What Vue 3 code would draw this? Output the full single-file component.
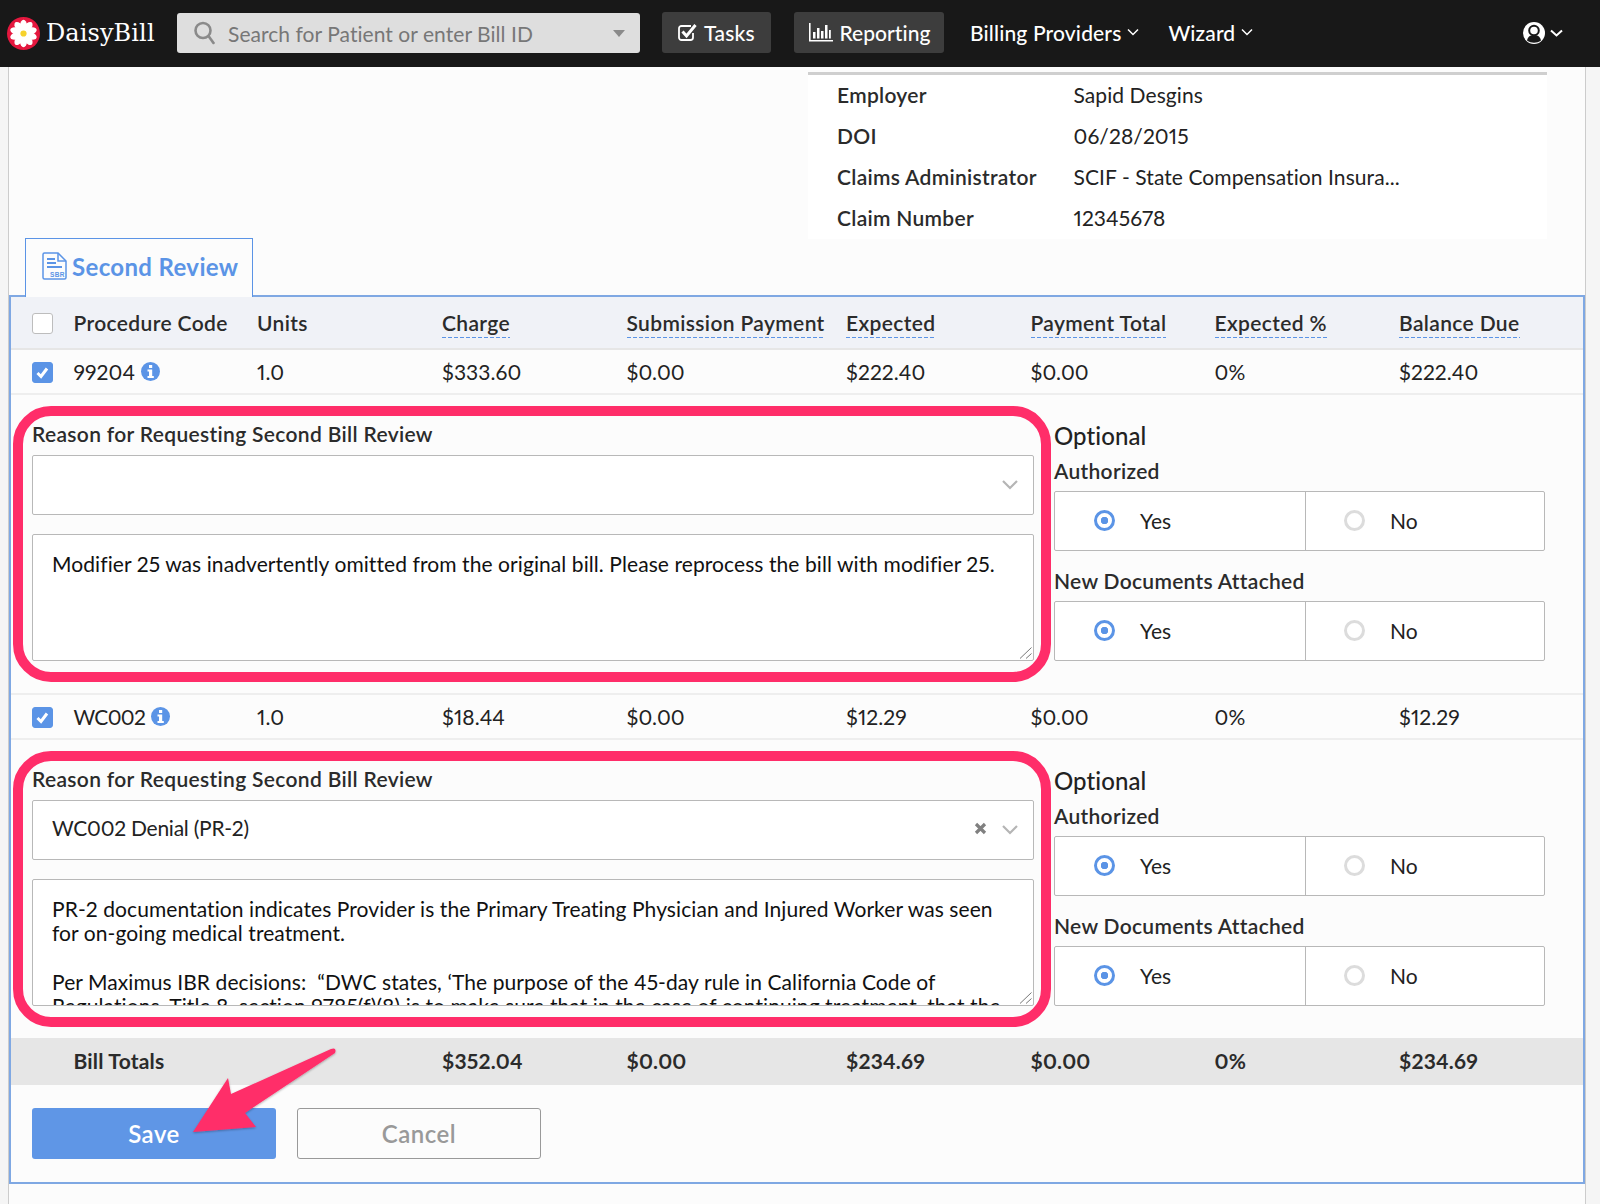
<script setup>
const info = [
  ['Employer', 'Sapid Desgins'],
  ['DOI', '06/28/2015'],
  ['Claims Administrator', 'SCIF - State Compensation Insura...'],
  ['Claim Number', '12345678'],
]
const headers = [
  { t: 'Units' }, { t: 'Charge', u: true }, { t: 'Submission Payment', u: true }, { t: 'Expected', u: true },
  { t: 'Payment Total', u: true }, { t: 'Expected %', u: true }, { t: 'Balance Due', u: true },
]
const blocks = [
  {
    code: '99204',
    cells: ['1.0', '$333.60', '$0.00', '$222.40', '$0.00', '0%', '$222.40'],
    reason: '',
    text: 'Modifier 25 was inadvertently omitted from the original bill. Please reprocess the bill with modifier 25.',
  },
  {
    code: 'WC002',
    tight: true,
    cells: ['1.0', '$18.44', '$0.00', '$12.29', '$0.00', '0%', '$12.29'],
    reason: 'WC002 Denial (PR-2)',
    text: 'PR-2 documentation indicates Provider is the Primary Treating Physician and Injured Worker was seen\nfor on-going medical treatment.\n\nPer Maximus IBR decisions:  “DWC states, ‘The purpose of the 45-day rule in California Code of\nRegulations, Title 8, section 9785(f)(8) is to make sure that in the case of continuing treatment, that the\ntreating physician reports on the status of the injured worker.’”',
  },
]
const totals = ['', '$352.04', '$0.00', '$234.69', '$0.00', '0%', '$234.69']
const toggles = ['Authorized', 'New Documents Attached']
const petals = [0, 36, 72, 108, 144, 180, 216, 252, 288, 324]
</script>

<template>
  <div class="root">
    <header class="top">
      <svg class="logo" viewBox="0 0 34 34" width="33" height="33">
        <circle cx="17" cy="17" r="17" fill="#e4173e" />
        <g fill="#fff">
          <ellipse v-for="a in petals" :key="a" cx="17" cy="9" rx="3.600" ry="6.200" :transform="`rotate(${a} 17 17)`" />
        </g>
        <circle cx="17" cy="17" r="3.200" fill="#f6d22c" />
      </svg>
      <span class="brand">DaisyBill</span>
      <div class="search">
        <svg width="24" height="26" viewBox="0 0 24 26" fill="none" stroke="#8a8a8a" stroke-width="2.600">
          <circle cx="10" cy="10.500" r="7.500" /><path d="M15.500 16l5 7" stroke-linecap="round" />
        </svg>
        <span class="search-text">Search for Patient or enter Bill ID</span>
        <i class="caret"></i>
      </div>
      <div class="nav-btn tasks">
        <svg width="20" height="19" viewBox="0 0 20 19" fill="none">
          <path d="M13 3H3.500A2.500 2.500 0 0 0 1 5.500v9A2.500 2.500 0 0 0 3.500 17h9a2.500 2.500 0 0 0 2.500-2.500V10" stroke="#fff" stroke-width="1.800" />
          <path d="M4.500 8.500l4 4.500L17.500 2" stroke="#fff" stroke-width="3" />
        </svg>
        <span>Tasks</span>
      </div>
      <div class="nav-btn reporting">
        <svg width="24" height="19" viewBox="0 0 24 19" fill="#fff">
          <path d="M0 0h1.600v17H24v1.500H0zM4 9h2.500v6.500H4zM8 5h2.500v10.500H8zM12 8h2.500v7.500H12zM16 2h2.500v13.500H16zM20 7h1.800v8.500H20z" />
        </svg>
        <span>Reporting</span>
      </div>
      <div class="nav-link providers">Billing Providers
        <svg class="chev" width="12" height="8" viewBox="0 0 12 8" fill="none" stroke="#fff" stroke-width="1.500"><path d="M1 1.500l5 5 5-5" /></svg>
      </div>
      <div class="nav-link wizard">Wizard
        <svg class="chev" width="12" height="8" viewBox="0 0 12 8" fill="none" stroke="#fff" stroke-width="1.500"><path d="M1 1.500l5 5 5-5" /></svg>
      </div>
      <div class="user">
        <svg width="22" height="22" viewBox="0 0 22 22">
          <circle cx="11" cy="11" r="11" fill="#fff" />
          <circle cx="11" cy="8.500" r="4.800" fill="none" stroke="#181818" stroke-width="2" />
          <path d="M4 18.500c1-4.500 4-5.500 7-5.500s6 1 7 5.500c-4 3-10 3-14 0z" fill="#181818" />
        </svg>
        <svg class="chev" width="13" height="8" viewBox="0 0 13 8" fill="none" stroke="#fff" stroke-width="2"><path d="M1 1.500l5.500 5 5.500-5" /></svg>
      </div>
    </header>

    <main class="page">
      <section class="info-wrap">
        <div class="info">
          <div v-for="r in info" :key="r[0]" class="info-row">
            <span class="info-k">{{ r[0] }}</span>
            <span>{{ r[1] }}</span>
          </div>
        </div>
      </section>

      <div class="tab">
        <svg width="25" height="28" viewBox="0 0 25 28" fill="none" stroke="#5b94e6" stroke-width="1.500">
          <path d="M2.500 1H16l8 8v16.500a1.500 1.500 0 0 1-1.500 1.500h-20A1.500 1.500 0 0 1 1 25.500v-23A1.500 1.500 0 0 1 2.500 1z" /><path d="M16 1v8h8" />
          <path d="M5 7h8M5 11h9M5 15h15" stroke-width="1.800" />
          <text x="8" y="24.500" font-size="6.500" font-weight="700" fill="#5b94e6" stroke="none" font-family="Liberation Sans, sans-serif">SBR</text>
        </svg>
        <span>Second Review</span>
      </div>

      <section class="panel">
        <div class="grid head">
          <span class="cb"></span>
          <span>Procedure Code</span>
          <span v-for="h in headers" :key="h.t"><span :class="{ dashed: h.u }">{{ h.t }}</span></span>
        </div>

        <template v-for="b in blocks" :key="b.code">
          <div class="grid row">
            <span class="cb on">
              <svg width="15" height="13" viewBox="0 0 15 13" fill="none" stroke="#fff" stroke-width="3"><path d="M2.500 7l3.500 3.500 6-8" /></svg>
            </span>
            <span class="code" :class="{ tight: b.tight }"><span>{{ b.code }}</span>
              <svg width="19" height="19" viewBox="0 0 19 19"><circle cx="9.500" cy="9.500" r="9.500" fill="#5b94e6" /><rect x="8" y="3" width="3.200" height="3" fill="#fff" /><path d="M6.500 7.500h4.700v6.500h1.600v2H6.500v-2h1.500V9.500H6.500z" fill="#fff" /></svg>
            </span>
            <span v-for="(c, i) in b.cells" :key="i">{{ c }}</span>
          </div>

          <div class="review">
            <div class="review-left">
              <label class="field-label">Reason for Requesting Second Bill Review</label>
              <div class="select">
                <span>{{ b.reason }}</span>
                <svg v-if="b.reason" class="clear" width="13" height="13" viewBox="0 0 13 13" stroke="#808080" stroke-width="3.200"><path d="M2 2l9 9M11 2l-9 9" /></svg>
                <svg class="sel-chev" width="16" height="10" viewBox="0 0 16 10" fill="none" stroke="#b5b5b5" stroke-width="2.200"><path d="M1 1l7 7 7-7" /></svg>
              </div>
              <div class="note-wrap">
                <textarea class="note" readonly :value="b.text"></textarea>
                <svg class="grip" width="13" height="12" viewBox="0 0 13 12" fill="none" stroke="#777" stroke-width="1"><path d="M1 11.500L12.500 .500M7 11.500l5.500-5" /></svg>
              </div>
            </div>
            <div class="review-right">
              <div class="optional">Optional</div>
              <div v-for="t in toggles" :key="t" class="toggle-group">
                <div class="toggle-label">{{ t }}</div>
                <div class="toggle">
                  <div class="opt yes"><i class="radio on"></i>Yes</div>
                  <div class="opt"><i class="radio"></i>No</div>
                </div>
              </div>
            </div>
            <div class="highlight"></div>
          </div>
        </template>

        <div class="grid totals">
          <span></span>
          <span>Bill Totals</span>
          <span v-for="(c, i) in totals" :key="i">{{ c }}</span>
        </div>

        <div class="actions">
          <button class="btn save">Save</button>
          <button class="btn cancel">Cancel</button>
        </div>
      </section>
    </main>

    <svg class="arrow" width="360" height="110" viewBox="0 0 360 110">
      <defs>
        <filter id="sh" x="-10%" y="-10%" width="120%" height="130%">
          <feDropShadow dx="0" dy="1" stdDeviation="1.200" flood-color="#000" flood-opacity="0.3" />
        </filter>
      </defs>
      <path d="M193 87 L228 33 L231 49 L331 4 Q337 2 335 8 L245 68 L256 82 Z" fill="#ff2d69" filter="url(#sh)" />
    </svg>
  </div>
</template>

<style scoped>
.root {
  position: relative;
  width: 1600px;
  height: 1204px;
  overflow: hidden;
  background: #f5f5f5;
  font-family: "Lato", "Liberation Sans", sans-serif;
  font-size: 21px;
  font-variant-numeric: proportional-nums;
  letter-spacing: 0.08px;
  color: #222;
}
.top {
  height: 67px;
  background: #181818;
  display: flex;
  align-items: center;
  color: #fff;
  padding-left: 7px;
  box-sizing: border-box;
}
.logo { flex: none; }
.brand {
  font-family: "DejaVu Serif", serif;
  font-size: 24px;
  margin-left: 6px;
  width: 131px;
  letter-spacing: 0.1px;
  margin-top: -1px;
}
.search {
  width: 463px;
  height: 40px;
  box-sizing: border-box;
  background: #dedede;
  border-radius: 3px;
  display: flex;
  align-items: center;
  padding-left: 16px;
  color: #777;
  margin-top: -1px;
}
.search-text { margin-left: 11px; flex: 1; letter-spacing: 0.05px; }
.caret {
  width: 0; height: 0;
  border-left: 6px solid transparent;
  border-right: 6px solid transparent;
  border-top: 7px solid #8a8a8a;
  margin-right: 15px;
}
.nav-btn {
  height: 41px;
  background: #3d3d3d;
  border-radius: 3px;
  display: flex;
  align-items: center;
  justify-content: center;
  gap: 6px;
  margin-top: -2px;
  font-weight: 500;
  letter-spacing: 0.25px;
}
.nav-btn span { margin-top: -1px; }
.tasks { width: 109px; margin-left: 22px; }
.reporting { width: 150px; margin-left: 23px; padding-left: 2px; box-sizing: border-box; letter-spacing: 0.05px; }
.nav-link { display: flex; align-items: center; gap: 6px; margin-top: -3px; font-weight: 500; letter-spacing: 0.15px; }
.providers { margin-left: 26px; }
.wizard { margin-left: 29px; }
.user { margin-left: auto; margin-right: 37px; display: flex; align-items: center; gap: 5px; margin-top: -2px; }

.page {
  margin-left: 8px;
  width: 1578px;
  height: 1137px;
  box-sizing: border-box;
  background: #fcfcfc;
  border-left: 1px solid #ccc;
  border-right: 1px solid #ccc;
}
.info-wrap {
  display: flex;
  justify-content: flex-end;
  padding-right: 38px;
  padding-top: 5px;
  height: 167px;
}
.info {
  width: 739px;
  background: #fff;
  border-top: 3px solid #cfcfcf;
  padding-left: 29px;
  box-sizing: border-box;
  height: 167px;
}
.info-row { height: 41px; display: flex; align-items: center; margin-top: -1px; margin-bottom: 1px; }
.info-k { width: 236.500px; font-weight: 600; letter-spacing: 0.3px; color: #2b2b2b; }

.tab {
  margin: -1px 0 -2px 16px;
  width: 228px;
  height: 59px;
  box-sizing: border-box;
  border: 1px solid #5b94e6;
  border-bottom: 0;
  background: #fcfcfc;
  position: relative;
  z-index: 1;
  display: flex;
  align-items: center;
  padding: 0 0 4px 16px;
  gap: 5px;
  color: #5b94e6;
  font-size: 24px;
  font-weight: 700;
  letter-spacing: 0.35px;
}
.panel {
  border: 2px solid #7fa8e3;
  height: 889px;
  box-sizing: border-box;
  width: 1576px;
}
.grid {
  display: grid;
  grid-template-columns: 41.500px 183.500px 185px 184.500px 219.500px 184.500px 184px 184.500px 1fr;
  padding-left: 21px;
  align-items: center;
}
.head {
  height: 53px;
  background: #f0f2f7;
  border-bottom: 2px solid #e6e6e6;
  box-sizing: border-box;
  font-weight: 600;
  letter-spacing: 0.36px;
  color: #2b2b2b;
}
.dashed {
  padding-bottom: 3px;
  background: repeating-linear-gradient(90deg, #5b94e6 0 4px, transparent 4px 6px) left bottom / 100% 1.500px no-repeat;
}
.cb {
  width: 21px; height: 21px;
  box-sizing: border-box;
  border: 1px solid #bdbdbd;
  border-radius: 3px;
  background: #fff;
  display: flex;
  align-items: center;
  justify-content: center;
  margin-top: 2px;
}
.cb.on { background: #5b94e6; border-color: #5b94e6; }
.row {
  height: 45px;
  box-sizing: border-box;
  border-bottom: 2px solid #eee;
}
.review + .row { border-top: 2px solid #eee; height: 47px; }
.code { display: flex; align-items: center; gap: 6px; }
.code.tight span { letter-spacing: -0.7px; }
.review {
  position: relative;
  display: flex;
  height: 298px;
  box-sizing: border-box;
  padding: 0 0 0 21px;
}
.review-left { width: 1002px; padding-top: 28.500px; display: flex; flex-direction: column; }
.field-label { font-weight: 600; height: 20px; line-height: 20px; margin-bottom: 11px; letter-spacing: 0.33px; color: #2b2b2b; }
.select {
  height: 60px;
  flex: none;
  box-sizing: border-box;
  background: #fff;
  border: 1px solid #b8b8b8;
  border-radius: 2px;
  display: flex;
  align-items: center;
  padding: 0 0 4px 19px;
  margin-bottom: 19px;
  position: relative;
  letter-spacing: -0.25px;
}
.clear { position: absolute; right: 46px; top: 21px; }
.sel-chev { position: absolute; right: 15px; top: 24px; }
.note-wrap { position: relative; height: 127px; }
.note {
  display: block;
  width: 1002px;
  height: 127px;
  box-sizing: border-box;
  padding: 17.500px 19px 0;
  background: #fff;
  border: 1px solid #b8b8b8;
  border-radius: 2px;
  font: inherit;
  letter-spacing: 0.08px;
  line-height: 24.200px;
  color: #111;
  overflow: hidden;
  resize: none;
  outline: none;
  margin: 0;
}
.grip { position: absolute; right: 2px; bottom: 2px; }
.review-right { margin-left: 20px; width: 491px; padding-top: 26px; }
.optional { font-size: 24px; font-weight: 500; height: 35px; line-height: 30px; }
.toggle-label { font-weight: 600; height: 24px; line-height: 24px; margin-top: 3px; margin-bottom: 8px; letter-spacing: 0.3px; color: #2b2b2b; }
.toggle-group + .toggle-group .toggle-label { margin-top: 17.500px; }
.toggle {
  height: 60px;
  box-sizing: border-box;
  background: #fff;
  border: 1px solid #b8b8b8;
  border-radius: 2px;
  display: flex;
}
.opt { display: flex; align-items: center; padding: 0 0 1px 38px; flex: 1; }
.opt.yes { flex: none; width: 251px; padding-left: 39px; box-sizing: border-box; border-right: 1px solid #b8b8b8; }
.radio {
  width: 21px; height: 21px;
  box-sizing: border-box;
  border: 3px solid #dcdcdc;
  border-radius: 50%;
  margin-right: 25px;
  background: #fff;
}
.radio.on { border-color: #5b94e6; background: radial-gradient(circle, #5b94e6 0 3.500px, #fff 4px); }
.highlight {
  position: absolute;
  left: 2px;
  top: 11px;
  width: 1038px;
  height: 276px;
  box-sizing: border-box;
  border: 10px solid #ff2d69;
  border-radius: 38px;
  pointer-events: none;
}
.totals {
  height: 47px;
  background: #e6e6e6;
  font-weight: 700;
  letter-spacing: 0.2px;
  color: #2b2b2b;
  padding-bottom: 2px;
  box-sizing: border-box;
}
.actions { padding: 23px 0 0 21px; display: flex; gap: 21px; }
.btn {
  width: 244px;
  height: 51px;
  border-radius: 3px;
  font: inherit;
  font-size: 24px;
  font-weight: 600;
  letter-spacing: 0.5px;
}
.save { background: #5f96e6; color: #fff; border: 0; }
.cancel { background: #fcfcfc; color: #999; border: 1px solid #999; }
.arrow { position: absolute; left: 0; top: 1045px; }
</style>

<style>
html, body { margin: 0; background: #f5f5f5; }
</style>
